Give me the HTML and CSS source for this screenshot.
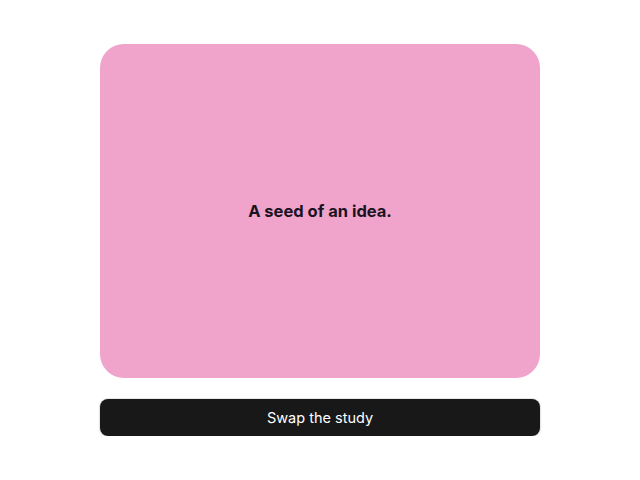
FILE: index.html
```html
<!DOCTYPE html>
<html>
<head>
<meta charset="utf-8">
<link rel="stylesheet" href="styles.css">
</head>
<body>
<main class="wrap">
  <section class="card"><p class="card-text">A seed of an idea.</p></section>
  <button class="swap">Swap the study</button>
</main>
</body>
</html>
```
FILE: styles.css
```css
html, body { margin: 0; padding: 0; background: #ffffff; }
body { font-family: Inter, "Noto Sans", sans-serif; }
.wrap {
  width: 440px;
  margin: 0 auto;
  padding-top: 44px;
  display: flex;
  flex-direction: column;
  gap: 21px;
}
.card {
  height: 334px;
  background: #f0a3cb;
  border-radius: 24px;
  display: flex;
  align-items: center;
  justify-content: center;
}
.card-text {
  margin: 0;
  font-size: 16.5px;
  font-weight: 700;
  color: #1a1422;
}
.swap {
  height: 37px;
  border: none;
  border-radius: 8px;
  background: #181818;
  color: #ffffff;
  font-family: Inter, "Noto Sans", sans-serif;
  font-size: 14.5px;
  box-shadow: 0 0 0 1px #e6e6e6, 0 1px 3px rgba(0,0,0,0.12);
  padding: 0;
}
```
